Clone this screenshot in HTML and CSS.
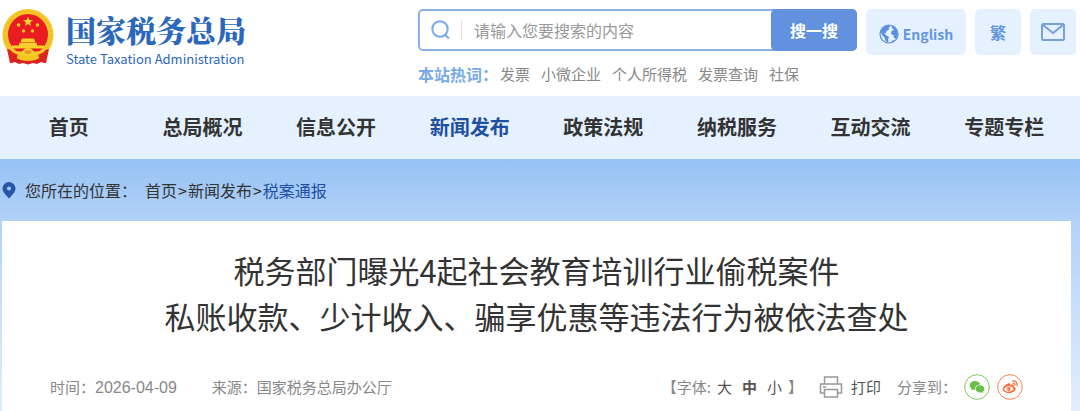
FILE: index.html
```html
<!DOCTYPE html>
<html lang="zh-CN">
<head>
<meta charset="utf-8">
<meta name="viewport" content="width=device-width, initial-scale=1">
<title>国家税务总局</title>
<link rel="stylesheet" href="styles.css">
</head>
<body>
<header class="header">
  <a class="logo" href="#">
    <svg class="emblem" viewBox="0 0 52 56" aria-hidden="true">
      <path fill="#dd2320" d="M7 36L8 54l5-1 4 2 4-1 5 1.500 5-1.500 4 1 4-2 5 1 1-18z"/>
      <ellipse cx="26" cy="26" rx="25.500" ry="26" fill="#f6c726"/>
      <ellipse cx="26" cy="26" rx="23" ry="23.500" fill="none" stroke="#ecb122" stroke-width="1" stroke-dasharray="2 2"/>
      <ellipse cx="26" cy="25.500" rx="20" ry="20.500" fill="#e81c22"/>
      <path fill="#f9d62e" d="M26 7.500l1.300 3.500 3.700.1-2.900 2.300 1 3.600-3.100-2.100-3.100 2.100 1-3.600-2.900-2.300 3.700-.1z"/>
      <g fill="#f6c51f"><circle cx="16.500" cy="16" r="1.800"/><circle cx="35.500" cy="16" r="1.800"/><circle cx="21.500" cy="22" r="1.700"/><circle cx="30.500" cy="22" r="1.700"/></g>
      <path fill="#f8d02a" d="M20 29.500h12l1.500 4h-15zM17 34h18v2.500H17zM10 36.500h32v3H10z"/>
      <path fill="#dd2320" d="M5 40q8 1 11 6l-3 7-5 1zM47 40q-8 1-11 6l3 7 5 1z"/>
      <path fill="none" stroke="#f6c726" stroke-width="3" d="M8 38q4 7 12 6l6-4 6 4q8 1 12-6M16 48q10-8 20 0"/>
      <ellipse cx="26" cy="43" rx="4.500" ry="3" fill="#ea9f24" stroke="#f9d62e" stroke-width="1.500"/>
      <path fill="#f6c51f" d="M16 47h20l-2 3.500H18z"/>
    </svg>
    <span class="logo-text">
      <span class="logo-cn">国家税务总局</span>
      <span class="logo-en">State Taxation Administration</span>
    </span>
  </a>
  <div class="tools">
    <div class="search-area">
      <form class="search">
        <svg class="search-icon" viewBox="0 0 20 20" aria-hidden="true"><circle cx="9" cy="9" r="7.700"/><path d="M13.500 14.500l4.500 4"/></svg>
        <input class="search-input" type="text" placeholder="请输入您要搜索的内容" aria-label="请输入您要搜索的内容">
        <button class="search-button" type="button">搜一搜</button>
      </form>
      <div class="hot">
        <strong class="hot-label">本站热词：</strong>
        <a href="#">发票</a><a href="#">小微企业</a><a href="#">个人所得税</a><a href="#">发票查询</a><a href="#">社保</a>
      </div>
    </div>
    <a class="tool tool-wide" href="#">
      <svg class="globe" viewBox="0 0 20 20" aria-hidden="true"><circle cx="10" cy="10" r="9" fill="#e5f1ff" stroke="#5b8fde" stroke-width="1.200"/><path fill="#5b8fde" d="M1.500 8Q3.500 1.500 10 1l1.500 2-2 .5.500 2-2.500 1.500-1 2.500-2-.5 3 2.500 2.500 1.500-1 2.500.5 3-3-1.500-1-3.500-2.500-2.500zM12.500 1.500Q18.500 4 18.800 10l-1.800 4.500-2-.5-.5-3-2.500-1 .5-3 2.500-1-2-2zM12.500 17l3-1.500-1.500 2.500z"/></svg>
      <span>English</span>
    </a>
    <a class="tool" href="#">繁</a>
    <a class="tool" href="#" aria-label="邮箱">
      <svg class="mail" viewBox="0 0 24 18" aria-hidden="true"><rect x="1" y="1" width="22" height="16" rx="1.500"/><path d="M2 2l10 8 10-8"/></svg>
    </a>
  </div>
</header>
<nav class="nav">
  <a href="#">首页</a><a href="#">总局概况</a><a href="#">信息公开</a><a class="active" href="#">新闻发布</a><a href="#">政策法规</a><a href="#">纳税服务</a><a href="#">互动交流</a><a href="#">专题专栏</a>
</nav>
<main class="main">
  <div class="crumbs">
    <svg class="pin" viewBox="0 0 14 18" aria-hidden="true"><path fill="#2656a8" fill-rule="evenodd" d="M7 1a6.500 6.500 0 0 0-6.500 6.500C.500 11 4 14 7 17.500 10 14 13.500 11 13.500 7.500A6.500 6.500 0 0 0 7 1zm0 4.500a2 2 0 1 1 0 4 2 2 0 0 1 0-4z"/></svg>
    <span class="crumbs-label">您所在的位置：</span>
    <span class="crumbs-path"><a href="#">首页</a><span class="sep">&gt;</span><a href="#">新闻发布</a><span class="sep">&gt;</span><a class="current" href="#">税案通报</a></span>
  </div>
  <article class="article">
    <h1 class="title">税务部门曝光4起社会教育培训行业偷税案件<br>私账收款、少计收入、骗享优惠等违法行为被依法查处</h1>
    <div class="meta">
      <span class="source">时间：<time class="date" datetime="2026-04-09">2026-04-09</time></span>
      <span class="source">来源：国家税务总局办公厅</span>
      <div class="actions">
        <div class="sizes"><span>【字体:</span><button type="button">大</button><button class="chosen" type="button">中</button><button type="button">小</button><span>】</span></div>
        <button class="print" type="button">
          <svg class="printer" viewBox="0 0 24 22" aria-hidden="true"><path d="M5.500 8V1h13v7M5.500 17H1.500V8h21v9h-4M5.500 13.500h13V21h-13zM4 11h3"/></svg>
          打印
        </button>
        <div class="share">
          <span class="share-label">分享到：</span>
          <a href="#" aria-label="微信"><svg class="social" viewBox="0 0 26 26" aria-hidden="true"><circle cx="13" cy="13" r="12.300" fill="#fff" stroke="#7cc75a"/><path fill="#6abf47" d="M11 7c-3 0-5.200 1.900-5.200 4.300 0 1.400.7 2.600 1.900 3.400L7.300 16.500l2-1c.6.2 1.300.2 1.900.2-.4-3 2-5.200 5-5.200C15.700 8.400 13.500 7 11 7z"/><path fill="#6abf47" d="M16 11.300c-2.500 0-4.300 1.600-4.300 3.600s1.900 3.600 4.300 3.600c.5 0 1-.1 1.500-.2l1.700.9-.4-1.500c1-.7 1.600-1.700 1.600-2.800 0-2-2-3.600-4.400-3.600z"/></svg></a>
          <a href="#" aria-label="微博"><svg class="social" viewBox="0 0 26 26" aria-hidden="true"><circle cx="13" cy="13" r="12.300" fill="#fff" stroke="#ff8052"/><path fill="#fb6a38" fill-rule="evenodd" d="M11 9.500c1.500-.6 2.700-.1 2.400 1.500 2-.8 3.700-.4 3.200 1.500 1.400.4 2 1.200 2 2.200 0 2.200-3 4.300-6.600 4.300-3.500 0-6.300-1.600-6.300-4 0-2 2.500-4.500 5.300-5.500zM11.800 12.300c-2.700.2-4.600 1.500-4.500 3.100.1 1.500 2.200 2.500 4.800 2.200 2.500-.2 4.300-1.600 4.200-3.100-.1-1.500-2-2.400-4.500-2.200z"/><circle cx="11.500" cy="15" r="2.100" fill="#fb6a38"/><circle cx="10.900" cy="15.300" r=".8" fill="#fff"/><path fill="none" stroke="#fb6a38" stroke-width="1.200" stroke-linecap="round" d="M15.500 7c3-.6 5.300 1.700 4.500 4.800M16 9.200c1.400-.2 2.200.7 1.900 2"/></svg></a>
        </div>
      </div>
    </div>
  </article>
</main>
</body>
</html>
```
FILE: styles.css
```css
* { box-sizing: border-box; }
body {
  margin: 0;
  background: #fff;
  color: #333;
  font: 16px/24px "Noto Sans CJK SC", sans-serif;
}
a { color: inherit; text-decoration: none; }
button { padding: 0; border: 0; background: none; color: inherit; font: inherit; cursor: pointer; }
svg { display: block; flex: none; }

.header {
  display: flex;
  justify-content: space-between;
  gap: 24px;
  padding: 9px 4px 10px 2px;
}
.logo { display: flex; gap: 12px; height: 56px; color: #2b67bd; white-space: nowrap; }
.emblem { width: 52px; height: 56px; }
.logo-text { display: flex; flex-direction: column; }
.logo-cn { font: 900 30px/40px "Noto Serif CJK SC", "Noto Sans CJK SC", serif; }
.logo-en { font-size: 13px; line-height: 20px; }

.tools { display: flex; flex: 0 1 658px; gap: 9px; align-items: flex-start; }
.search-area { flex: 1; }
.search {
  display: flex;
  align-items: center;
  height: 42px;
  padding-left: 11px;
  border: 2px solid #8ab0e6;
  border-radius: 5px;
}
.search-icon { width: 20px; height: 20px; fill: none; stroke: #78aae6; stroke-width: 2; }
.search-input {
  flex: 1;
  min-width: 0;
  height: 20px;
  margin-left: 10px;
  padding: 0 12px;
  border: 0;
  border-left: 1px solid #e2e2e2;
  outline: 0;
  background: none;
  color: #333;
  font: inherit;
}
.search-input::placeholder { color: #999; }
.search-button {
  align-self: stretch;
  width: 86px;
  margin: -2px;
  border-radius: 5px;
  background: #6191df;
  color: #fff;
  font-weight: 700;
}
.hot { display: flex; flex-wrap: wrap; gap: 0 11px; margin-top: 11px; color: #888; font-size: 15px; }
.hot-label { margin-right: -9px; color: #78aae6; font-size: 16px; }
.tool {
  display: flex;
  align-items: center;
  justify-content: center;
  gap: 4px;
  width: 46px;
  height: 46px;
  border-radius: 5px;
  background: #e5f1ff;
  color: #6496e0;
  font-weight: 700;
}
.tool-wide { width: 100px; padding-top: 4px; font-size: 14px; }
.globe { width: 20px; height: 20px; }
.mail { width: 24px; height: 18px; fill: none; stroke: #779fdb; stroke-width: 2; }

.nav { display: flex; padding: 0 9px 0 2px; background: #e5f1ff; }
.nav a {
  flex: 1;
  padding: 16px 0 17px;
  font-size: 20px;
  line-height: 30px;
  font-weight: 700;
  text-align: center;
}
.nav .active { color: #1f509f; }

.main {
  min-height: 252px;
  padding: 0 9px 0 2px;
  background: linear-gradient(#96c2f5, #b2d2f7 62px, #e2eefd 252px);
}
.crumbs { display: flex; align-items: center; height: 62px; padding-bottom: 1px; }
.pin { width: 14px; height: 18px; }
.crumbs-label { margin: 0 8px 0 9px; }
.sep { margin: 0 1px; }
.current { color: #1f50a4; }

.article { padding: 26px 48px 11px; background: #fff; }
.title { margin: 0; font-size: 31px; line-height: 46px; font-weight: 400; text-align: center; }
.meta { display: flex; flex-wrap: wrap; align-items: center; gap: 0 35px; margin-top: 35px; color: #888; font-size: 15px; }
.date { font-family: "Liberation Sans", sans-serif; font-size: 16px; }
.actions { display: flex; align-items: center; gap: 16px; margin-left: auto; }
.sizes { display: flex; gap: 10px; }
.sizes span:first-child { margin-right: -4px; }
.sizes span:last-child { margin-left: -4px; }
.sizes button { color: #555; }
.sizes .chosen { font-weight: 700; }
.print { display: flex; align-items: center; gap: 8px; color: #555; }
.printer { width: 24px; height: 22px; fill: none; stroke: #999; stroke-width: 1.5; }
.share { display: flex; align-items: center; gap: 7px; }
.social { width: 26px; height: 26px; }
```
